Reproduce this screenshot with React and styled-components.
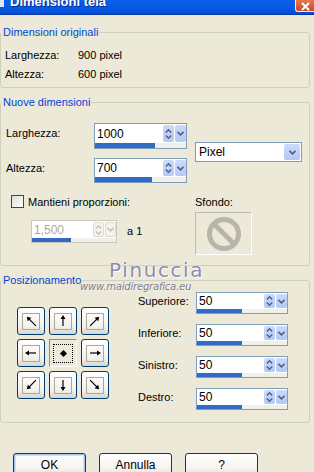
import React from "react";
import styled, { createGlobalStyle } from "styled-components";

const GlobalStyle = createGlobalStyle`
  body {
    margin: 0;
    background: #ece9d8;
    font-family: "Liberation Sans", Arial, sans-serif;
    font-size: 11px;
    color: #000;
  }
`;

const Dialog = styled.div`
  position: relative;
  width: 314px;
  height: 472px;
  overflow: hidden;
  background: #ece9d8;
`;

const TitleBar = styled.div`
  height: 14px;
  display: flex;
  align-items: flex-start;
  justify-content: space-between;
  background: linear-gradient(#0b61ea, #0558e4 60%, #034bd6);
  border-bottom: 1px solid #0837a6;
  overflow: hidden;
`;

const TitleIcon = styled.div`
  width: 4px;
  height: 7px;
  background: #dfe8f7;
`;

const Title = styled.div`
  margin-top: -6px;
  margin-left: 6px;
  flex: 1;
  font-weight: bold;
  font-size: 13px;
  line-height: 15px;
  color: #fff;
  text-shadow: 1px 1px 0 #0a2a8a;
`;

const CloseBtn = styled.div`
  width: 18px;
  height: 11px;
  display: flex;
  align-items: flex-end;
  justify-content: center;
  background: linear-gradient(#e8764f, #d4471f);
  border-left: 1px solid #f2f2f2;
  border-bottom: 1px solid #f2f2f2;
  border-bottom-left-radius: 3px;
`;

const Body = styled.div`
  display: flex;
  flex-direction: column;
`;

const Group = styled.fieldset`
  margin: ${(p) => p.$top}px 0 0 0;
  padding: ${(p) => p.$pad}px 0 0 0;
  width: 310px;
  height: ${(p) => p.$h}px;
  box-sizing: border-box;
  border: 1px solid #d0d0bf;
  border-radius: 3px;
  min-width: 0;
`;

const Legend = styled.legend`
  padding: 0 1px;
  margin-left: 1px;
  color: #0046d5;
  font-size: 11px;
  line-height: 13px;
`;

const InfoGrid = styled.div`
  display: grid;
  grid-template-columns: 73px auto;
  grid-auto-rows: 19px;
  padding-left: 4px;
  align-items: center;
`;

const Row = styled.div`
  display: flex;
  align-items: ${(p) => p.$align || "flex-start"};
  margin-top: ${(p) => p.$mt || 0}px;
  padding-left: ${(p) => p.$pl || 0}px;
`;

const Label = styled.div`
  width: ${(p) => p.$w}px;
  line-height: ${(p) => p.$lh || 13}px;
  margin-left: ${(p) => p.$ml || 0}px;
  margin-top: ${(p) => p.$mt || 0}px;
  color: ${(p) => (p.$disabled ? "#aca899" : "#000")};
  flex-shrink: 0;
`;

const Col = styled.div`
  display: flex;
  flex-direction: column;
  padding-top: ${(p) => p.$pt || 0}px;
  margin-left: ${(p) => p.$ml || 0}px;
`;

const Field = styled.div`
  width: ${(p) => p.$w}px;
  height: ${(p) => p.$h}px;
  box-sizing: border-box;
  border: 1px solid ${(p) => (p.$disabled ? "#c9c7ba" : "#7f9db9")};
  background: #fff;
  display: flex;
  flex-direction: column;
  flex-shrink: 0;
`;

const FieldTop = styled.div`
  flex: 1;
  display: flex;
`;

const FieldText = styled.div`
  flex: 1;
  padding-left: 2px;
  display: flex;
  align-items: center;
  font-size: 12px;
  color: ${(p) => (p.$disabled ? "#aca899" : "#000")};
`;

const SpinBtn = styled.div`
  width: 11px;
  margin: 1px 0 1px 1px;
  border-radius: 2px;
  display: flex;
  align-items: center;
  justify-content: center;
  background: ${(p) =>
    p.$disabled ? "#f4f3ee" : "linear-gradient(#cbd9fb, #b5c9f6)"};
  border: ${(p) => (p.$disabled ? "1px solid #dedcd0" : "none")};
  box-sizing: border-box;
`;

const Bar = styled.div`
  height: ${(p) => p.$h}px;
  background: linear-gradient(
    to right,
    #316ac5 ${(p) => p.$pct}%,
    #f0efe9 ${(p) => p.$pct}%
  );
`;

const Select = styled.div`
  width: 107px;
  height: 20px;
  box-sizing: border-box;
  border: 1px solid #7f9db9;
  background: #fff;
  display: flex;
  font-size: 12px;
`;

const SelectText = styled.div`
  flex: 1;
  padding-left: 3px;
  display: flex;
  align-items: center;
`;

const DropBtn = styled.div`
  width: 16px;
  margin: 1px;
  border-radius: 2px;
  background: linear-gradient(#cbd9fb, #b3c7f5);
  display: flex;
  align-items: center;
  justify-content: center;
`;

const CheckBox = styled.div`
  width: 13px;
  height: 13px;
  box-sizing: border-box;
  border: 1px solid #1c5180;
  background: linear-gradient(135deg, #dcdcd7, #fff);
  margin-right: 4px;
`;

const Preview = styled.div`
  width: 57px;
  height: 43px;
  margin-top: 3px;
  box-sizing: border-box;
  border: 1px solid #bdb9ad;
  border-right-color: #fff;
  border-bottom-color: #fff;
  display: flex;
  align-items: center;
  justify-content: center;
`;

const ArrowGrid = styled.div`
  display: grid;
  grid-template-columns: repeat(3, 28px);
  grid-auto-rows: 28px;
  gap: 4px;
  margin: 20px 29px 0 16px;
`;

const ArrowBtn = styled.div`
  box-sizing: border-box;
  border: 1px solid #003c74;
  border-radius: 3px;
  background: linear-gradient(#fff, #f3f2ec 70%, #d9d6c9);
  display: flex;
  align-items: center;
  justify-content: center;
`;

const ArrowInner = styled.div`
  width: 18px;
  height: 17px;
  box-sizing: border-box;
  border: 1px solid #aca899;
  display: flex;
  align-items: center;
  justify-content: center;
`;

const CenterBtn = styled.div`
  box-sizing: border-box;
  border: 1px solid #fff;
  border-top-color: #8e8b80;
  border-left-color: #8e8b80;
  background: #ece9d8;
  display: flex;
  align-items: center;
  justify-content: center;
`;

const FocusRect = styled.div`
  width: 20px;
  height: 19px;
  box-sizing: border-box;
  border: 1px dotted #000;
  display: flex;
  align-items: center;
  justify-content: center;
`;

const Diamond = styled.div`
  width: 5px;
  height: 5px;
  background: #000;
  transform: rotate(45deg);
`;

const MarginList = styled.div`
  display: flex;
  flex-direction: column;
  gap: 10px;
  padding-top: 5px;
`;

const Buttons = styled.div`
  display: flex;
  gap: 13px;
  margin: 30px 0 0 13px;
`;

const Button = styled.div`
  width: 73px;
  height: 23px;
  box-sizing: border-box;
  border: 1px solid #003c74;
  border-radius: 3px;
  background: linear-gradient(#fff, #f4f3ee 70%, #e2dfd4);
  box-shadow: ${(p) =>
    p.$default ? "inset 0 0 0 1px #a9c5f4, inset 0 0 0 2px #cfdef8" : "none"};
  display: flex;
  align-items: center;
  justify-content: center;
  font-size: 12px;
`;

const Watermark = styled.div`
  position: absolute;
  left: 109px;
  top: 258px;
  font-family: "DejaVu Sans", sans-serif;
  font-size: 20px;
  letter-spacing: 1.6px;
  color: #8c8ca8;
  text-shadow: 0 0 2px #fff, 1px 1px 0 #fff;
`;

const WatermarkUrl = styled.div`
  position: absolute;
  left: 80px;
  top: 281px;
  font-family: "DejaVu Sans", sans-serif;
  font-style: italic;
  font-size: 10px;
  letter-spacing: -0.2px;
  color: #7d7d8c;
  text-shadow: 0 0 2px #fff;
`;

const Chevron = ({ color = "#4d6185" }) => (
  <svg width="7" height="5" viewBox="0 0 7 5">
    <path d="M0.5 0.8 L3.5 3.8 L6.5 0.8" fill="none" stroke={color} strokeWidth="1.6" />
  </svg>
);

const UpDown = ({ color = "#4d6185" }) => (
  <svg width="7" height="12" viewBox="0 0 7 12">
    <path d="M0.8 4.5 L3.5 1.8 L6.2 4.5" fill="none" stroke={color} strokeWidth="1.5" />
    <path d="M0.8 7.5 L3.5 10.2 L6.2 7.5" fill="none" stroke={color} strokeWidth="1.5" />
  </svg>
);

const SpinField = ({ value, w, h, bar, pct, disabled }) => {
  const c = disabled ? "#c5c2b8" : "#4d6185";
  return (
    <Field $w={w} $h={h} $disabled={disabled}>
      <FieldTop>
        <FieldText $disabled={disabled}>{value}</FieldText>
        <SpinBtn $disabled={disabled}>
          <UpDown color={c} />
        </SpinBtn>
        <SpinBtn $disabled={disabled}>
          <Chevron color={c} />
        </SpinBtn>
      </FieldTop>
      <Bar $h={bar} $pct={pct} />
    </Field>
  );
};

const Arrow = ({ angle, long }) => (
  <svg width="14" height="14" viewBox="0 0 14 14">
    <g transform={`rotate(${angle} 7 7)`}>
      <line x1="7" y1={long ? 14 : 12} x2="7" y2="3" stroke="#000" strokeWidth="1.2" />
      <polygon points="7,1 4.5,5 9.5,5" fill="#000" />
    </g>
  </svg>
);

const positions = [315, 0, 45, 270, null, 90, 225, 180, 135];

const margins = ["Superiore:", "Inferiore:", "Sinistro:", "Destro:"];

const App = () => {
  return (
    <Dialog>
      <GlobalStyle />
      <TitleBar>
        <TitleIcon />
        <Title>Dimensioni tela</Title>
        <CloseBtn>
          <svg width="9" height="9" viewBox="0 0 9 9">
            <path d="M1 1 L8 8 M8 1 L1 8" stroke="#fff" strokeWidth="2" />
          </svg>
        </CloseBtn>
      </TitleBar>
      <Body>
        <Group $top={11} $h={62} $pad={6}>
          <Legend>Dimensioni originali</Legend>
          <InfoGrid>
            <span>Larghezza:</span>
            <span>900 pixel</span>
            <span>Altezza:</span>
            <span>600 pixel</span>
          </InfoGrid>
        </Group>

        <Group $top={8} $h={170} $pad={14}>
          <Legend>Nuove dimensioni</Legend>
          <Row>
            <Col>
              <Row $pl={5}>
                <Label $w={88} $lh={20}>Larghezza:</Label>
                <SpinField value="1000" w={93} h={26} bar={5} pct={66} />
              </Row>
              <Row $pl={5} $mt={9}>
                <Label $w={88} $lh={20}>Altezza:</Label>
                <SpinField value="700" w={93} h={25} bar={5} pct={63} />
              </Row>
              <Row $pl={10} $mt={12} $align="center">
                <CheckBox />
                <span>Mantieni proporzioni:</span>
              </Row>
              <Row $pl={30} $mt={12} $align="center">
                <SpinField value="1,500" w={86} h={23} bar={4} pct={47} disabled />
                <Label $w={40} $ml={10}>a 1</Label>
              </Row>
            </Col>
            <Col $pt={19} $ml={8}>
              <Select>
                <SelectText>Pixel</SelectText>
                <DropBtn>
                  <Chevron />
                </DropBtn>
              </Select>
              <Label $w={60} $mt={34}>Sfondo:</Label>
              <Preview>
                <svg width="36" height="36" viewBox="0 0 36 36">
                  <circle cx="18" cy="18" r="14.5" fill="none" stroke="#b9b5aa" strokeWidth="5" />
                  <line x1="8" y1="8" x2="28" y2="28" stroke="#b9b5aa" strokeWidth="5" />
                </svg>
              </Preview>
            </Col>
          </Row>
        </Group>

        <Group $top={8} $h={149} $pad={0}>
          <Legend>Posizionamento</Legend>
          <Row>
            <ArrowGrid>
              {positions.map((a, i) =>
                a === null ? (
                  <CenterBtn key={i}>
                    <FocusRect>
                      <Diamond />
                    </FocusRect>
                  </CenterBtn>
                ) : (
                  <ArrowBtn key={i}>
                    <ArrowInner>
                      <Arrow angle={a} long={a % 90 !== 0} />
                    </ArrowInner>
                  </ArrowBtn>
                )
              )}
            </ArrowGrid>
            <MarginList>
              {margins.map((m) => (
                <Row key={m}>
                  <Label $w={58} $lh={18}>{m}</Label>
                  <SpinField value="50" w={92} h={22} bar={4} pct={50} />
                </Row>
              ))}
            </MarginList>
          </Row>
        </Group>

        <Buttons>
          <Button $default>OK</Button>
          <Button>Annulla</Button>
          <Button>?</Button>
        </Buttons>
      </Body>
      <Watermark>Pinuccia</Watermark>
      <WatermarkUrl>www.maidiregrafica.eu</WatermarkUrl>
    </Dialog>
  );
};

export default App;
